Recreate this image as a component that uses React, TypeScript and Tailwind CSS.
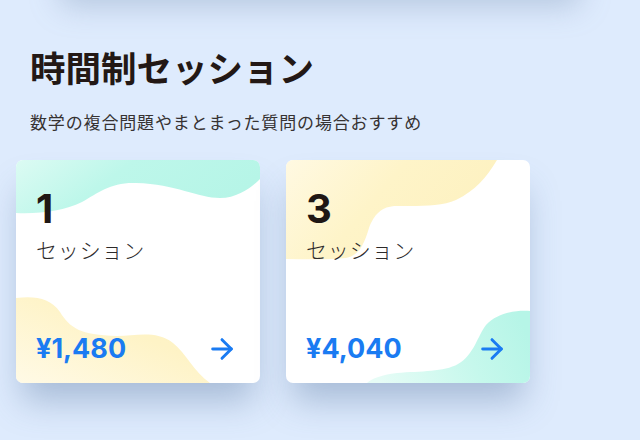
import { ArrowRight } from 'lucide-react';

type Plan = {
  count: string;
  price: string;
  variant: 'a' | 'b';
};

const plans: Plan[] = [
  { count: '1', price: '¥1,480', variant: 'a' },
  { count: '3', price: '¥4,040', variant: 'b' },
];

function Blobs({ variant }: { variant: 'a' | 'b' }) {
  // decorative waves, card is 244x223
  if (variant === 'a') {
    return (
      <svg className="absolute inset-0 w-full h-full" viewBox="0 0 244 223" preserveAspectRatio="none">
        <defs>
          <linearGradient id="mintA" x1="0" y1="0" x2="1" y2="0.3">
            <stop offset="0" stopColor="#dcfbf3" />
            <stop offset="0.45" stopColor="#bdf7ea" />
            <stop offset="1" stopColor="#b6f5e7" />
          </linearGradient>
          <linearGradient id="yelA" x1="0" y1="1" x2="1" y2="0">
            <stop offset="0" stopColor="#fffae6" />
            <stop offset="0.6" stopColor="#fef3c6" />
            <stop offset="1" stopColor="#fdf2c2" />
          </linearGradient>
        </defs>
        <path
          d="M0 0 H244 V19 C236 27 222 38 204 38 C182 38 160 24 120 23 C95 22 82 33 66 42 C48 51 24 54 0 53 Z"
          fill="url(#mintA)"
        />
        <path
          d="M0 138 C20 136 34 138 44 152 C54 168 64 175 101 176 C120 176 140 170 157 183 C170 193 178 212 194 223 H0 Z"
          fill="url(#yelA)"
        />
      </svg>
    );
  }
  return (
    <svg className="absolute inset-0 w-full h-full" viewBox="0 0 244 223" preserveAspectRatio="none">
      <defs>
        <linearGradient id="yelB" x1="0" y1="0" x2="1" y2="0.4">
          <stop offset="0" stopColor="#fff9e2" />
          <stop offset="0.5" stopColor="#fef4c8" />
          <stop offset="1" stopColor="#fdf1c0" />
        </linearGradient>
        <linearGradient id="mintB" x1="0" y1="0.6" x2="1" y2="0.4">
          <stop offset="0" stopColor="#e6fcf6" />
          <stop offset="0.6" stopColor="#c6f8ec" />
          <stop offset="1" stopColor="#b6f5e7" />
        </linearGradient>
      </defs>
      <path
        d="M0 0 H211 C200 18 190 30 170 40 C155 47 130 46 111 46 C95 46 88 55 83 68 C78 84 74 95 60 98 C40 100 20 99 0 99 Z"
        fill="url(#yelB)"
      />
      <path
        d="M244 151 C232 150 212 152 200 165 C192 175 188 195 172 204 C158 212 135 211 111 213 C95 215 85 219 81 223 H244 Z"
        fill="url(#mintB)"
      />
    </svg>
  );
}

function PlanCard({ plan }: { plan: Plan }) {
  return (
    <div className="relative w-[244px] h-[223px] rounded-[7px] bg-white overflow-hidden shadow-[0_24px_34px_-6px_rgba(80,110,155,0.38)]">
      <Blobs variant={plan.variant} />
      <div className="relative h-full flex flex-col px-5 pt-[29px] pb-[18px]">
        <div className="text-[40px] leading-none font-bold text-[#1f1714] font-['Inter',sans-serif]">
          {plan.count}
        </div>
        <div className="mt-[10px] text-[21px] leading-none tracking-[0.04em] font-light text-[#2d2a2a] font-['Noto_Sans_CJK_JP',sans-serif]">
          セッション
        </div>
        <div className="mt-auto flex items-center justify-between pr-[2px]">
          <span className="text-[27px] leading-none font-bold text-[#1a7bf2] font-['Inter',sans-serif]">
            {plan.price}
          </span>
          <ArrowRight size={32} strokeWidth={2.2} className="text-[#1a7bf2]" />
        </div>
      </div>
    </div>
  );
}

export default function App() {
  return (
    <div className="h-[440px] overflow-hidden bg-[#deebfd] font-['Noto_Sans_CJK_JP',sans-serif]">
      {/* card above the viewport, only its shadow shows */}
      <div className="mx-[60px] h-[100px] -mt-[104px] rounded-lg bg-[#d6e3f4] shadow-[0_10px_30px_rgba(120,145,180,0.4)]" />
      <div className="px-[30px] pt-[53px]">
        <h1 className="text-[35.5px] leading-none font-bold text-[#231815]">時間制セッション</h1>
        <p className="mt-[28px] text-[17px] leading-none tracking-[0.05em] text-[#363232]">
          数学の複合問題やまとまった質問の場合おすすめ
        </p>
      </div>
      <div className="flex gap-[26px] px-4 mt-[30px]">
        {plans.map(p => (
          <PlanCard key={p.count} plan={p} />
        ))}
      </div>
    </div>
  );
}
